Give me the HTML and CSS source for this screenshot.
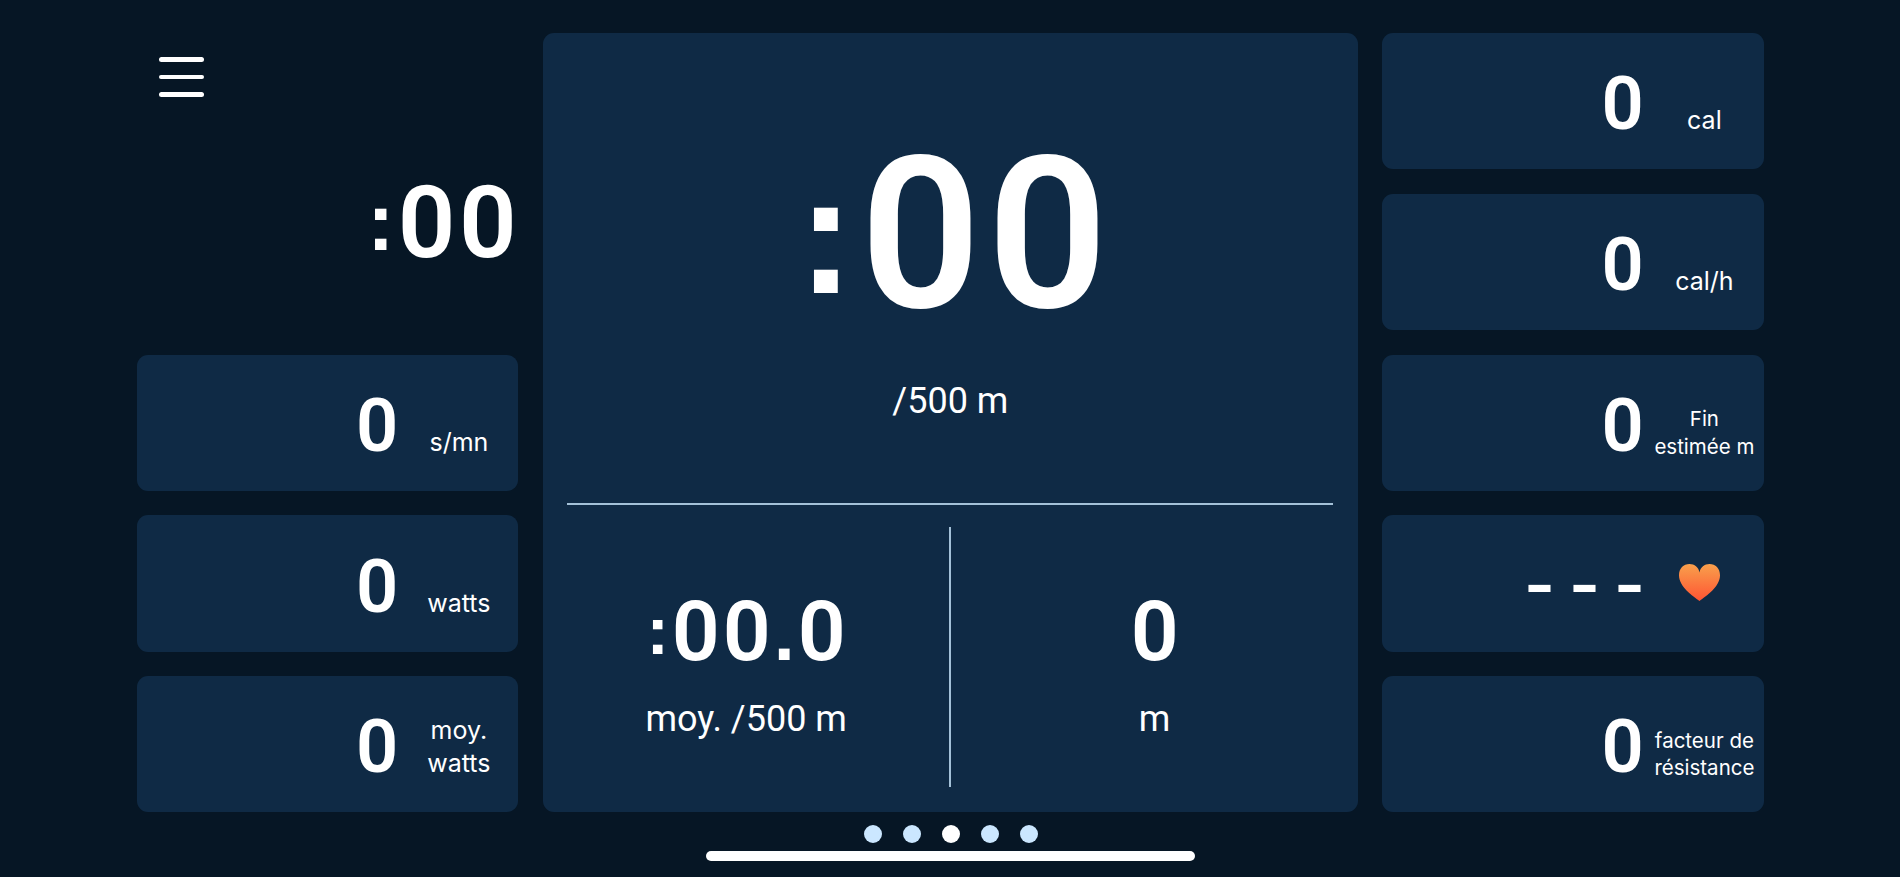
FILE: index.html
```html
<!DOCTYPE html>
<html lang="fr">
<head>
  <meta charset="UTF-8" />
  <meta name="viewport" content="width=device-width, initial-scale=1.0"/>
  <title>Rameur</title>
  <link rel="stylesheet" href="styles.css">
</head>
<body>

  <main class="dashboard">

    <!-- Left column -->
    <section class="column">
      <div class="timer">
        <button class="menu-btn" aria-label="Menu"><span></span><span></span><span></span></button>
        <div class="time"><span class="sep">:</span>00</div>
      </div>
      <div class="card"><div class="value">0</div><div class="unit">s/mn</div></div>
      <div class="card"><div class="value">0</div><div class="unit">watts</div></div>
      <div class="card"><div class="value">0</div><div class="unit">moy.<br>watts</div></div>
    </section>

    <!-- Center panel -->
    <section class="panel">
      <div class="pace">
        <div class="pace-value"><span class="sep">:</span>00</div>
        <div class="label">/500 m</div>
      </div>
      <div class="summary">
        <div class="summary-item">
          <div class="summary-value"><span class="sep">:</span>00<span class="dot">.</span>0</div>
          <div class="label">moy. /500 m</div>
        </div>
        <div class="divider"></div>
        <div class="summary-item">
          <div class="summary-value">0</div>
          <div class="label">m</div>
        </div>
      </div>
    </section>

    <!-- Right column -->
    <section class="column">
      <div class="card"><div class="value">0</div><div class="unit">cal</div></div>
      <div class="card"><div class="value">0</div><div class="unit">cal/h</div></div>
      <div class="card"><div class="value">0</div><div class="unit small">Fin<br>estimée m</div></div>
      <div class="card">
        <div class="value dashes">- - -</div>
        <svg class="heart" viewBox="0 0 41 37">
          <defs>
            <linearGradient id="heart-fill" x1="0" y1="0" x2="0" y2="1">
              <stop offset="0" stop-color="#f8a04c"/>
              <stop offset="1" stop-color="#ff5433"/>
            </linearGradient>
          </defs>
          <path fill="url(#heart-fill)" d="M20.5 37C14 32 0 23 0 11.2C0 4.5 4.5 0 10.5 0C15.5 0 19.5 3 20.5 8.500C21.5 3 25.5 0 30.5 0C36.5 0 41 4.5 41 11.2C41 23 27 32 20.5 37Z"/>
        </svg>
      </div>
      <div class="card"><div class="value">0</div><div class="unit small">facteur de<br>résistance</div></div>
    </section>

  </main>

  <!-- Page dots -->
  <nav class="dots">
    <span></span>
    <span></span>
    <span class="active"></span>
    <span></span>
    <span></span>
  </nav>
  <div class="home-bar"></div>

</body>
</html>
```
FILE: styles.css
```css
body {
  margin: 0;
  height: 877px;
  overflow: hidden;
  background-color: #061625;
  color: #fff;
  font-family: Inter, "Liberation Sans", sans-serif;
}

.dashboard {
  display: grid;
  grid-template-columns: 381.5px 1fr 381.5px;
  gap: 24.5px;
  width: 1627px;
  height: 779px;
  margin-left: 136.9px;
  padding-top: 33.3px;
}

.column {
  display: grid;
  grid-template-rows: repeat(5, minmax(0, 1fr));
  gap: 24.5px;
}

/* Timer */
.timer {
  grid-row: span 2;
  display: flex;
  flex-direction: column;
}

.menu-btn {
  display: flex;
  flex-direction: column;
  gap: 13px;
  width: 45px;
  margin: 24px 0 0 22px;
  padding: 0;
  border: none;
  background: none;
}

.menu-btn span {
  height: 4.5px;
  border-radius: 3px;
  background-color: #fff;
}

.time,
.pace-value,
.summary-value,
.value {
  font-family: Roboto, sans-serif;
  font-weight: 600;
  white-space: nowrap;
}

.time {
  margin: 66px -2px 0 0;
  font-size: 101px;
  line-height: 120px;
  letter-spacing: 0.036em;
  text-align: right;
}

.sep {
  font-family: "Liberation Sans", sans-serif;
  font-weight: 700;
  font-size: 0.8em;
  line-height: 1;
  vertical-align: 0.085em;
}

.dot {
  font-family: "Liberation Sans", sans-serif;
  font-weight: 700;
  font-size: 0.9em;
  line-height: 1;
}

/* Cards */
.card {
  display: flex;
  justify-content: flex-end;
  align-items: last baseline;
  box-sizing: border-box;
  padding-bottom: 25px;
  border-radius: 11px;
  background-color: #0f2a45;
}

.value {
  margin-right: 1px;
  font-size: 74px;
  line-height: 80px;
}

.unit {
  width: 119px;
  font-size: 25px;
  line-height: 33px;
  text-align: center;
}

.unit.small {
  align-self: flex-end;
  margin-bottom: 5.5px;
  font-size: 20.5px;
  line-height: 27.5px;
}

.dashes {
  margin: 0 -1px 5px 0;
  align-self: flex-end;
  font-family: "Liberation Sans", sans-serif;
  font-size: 90px;
  font-weight: 400;
  word-spacing: -10px;
}

.heart {
  align-self: flex-start;
  width: 41px;
  height: 37px;
  margin: 49px 43.5px 0 36px;
}

/* Center panel */
.panel {
  padding: 0 24.5px;
  border-radius: 11px;
  background-color: #0f2a45;
}

.pace {
  box-sizing: border-box;
  height: 471.5px;
  padding-top: 82px;
  border-bottom: 2px solid #a4c1d8;
  text-align: center;
}

.pace-value {
  padding-left: 11px;
  font-size: 211px;
  line-height: 240px;
  letter-spacing: 0.03em;
}

.label {
  margin-top: 24px;
  font-family: Roboto, sans-serif;
  font-size: 36px;
  line-height: 44px;
}

.summary {
  display: flex;
  height: 307px;
  margin: 0 -24.5px;
}

.summary-item {
  flex: 1;
  padding-top: 77px;
  text-align: center;
}

.summary-item .label {
  margin-top: 15px;
}

.summary-value {
  padding-left: 3px;
  font-size: 84px;
  line-height: 100px;
  letter-spacing: 0.036em;
}

.divider {
  width: 2px;
  margin: 22px 0 24.5px;
  background-color: #a4c1d8;
}

/* Page dots */
.dots {
  display: flex;
  justify-content: center;
  gap: 20.8px;
  margin-top: 12.7px;
  padding-left: 2px;
}

.dots span {
  width: 18px;
  height: 18px;
  border-radius: 50%;
  background-color: #cbe7ff;
}

.dots .active {
  background-color: #fff;
}

.home-bar {
  width: 489px;
  height: 10.5px;
  margin: 8px auto 0;
  border-radius: 6px;
  background-color: #fff;
}
```
